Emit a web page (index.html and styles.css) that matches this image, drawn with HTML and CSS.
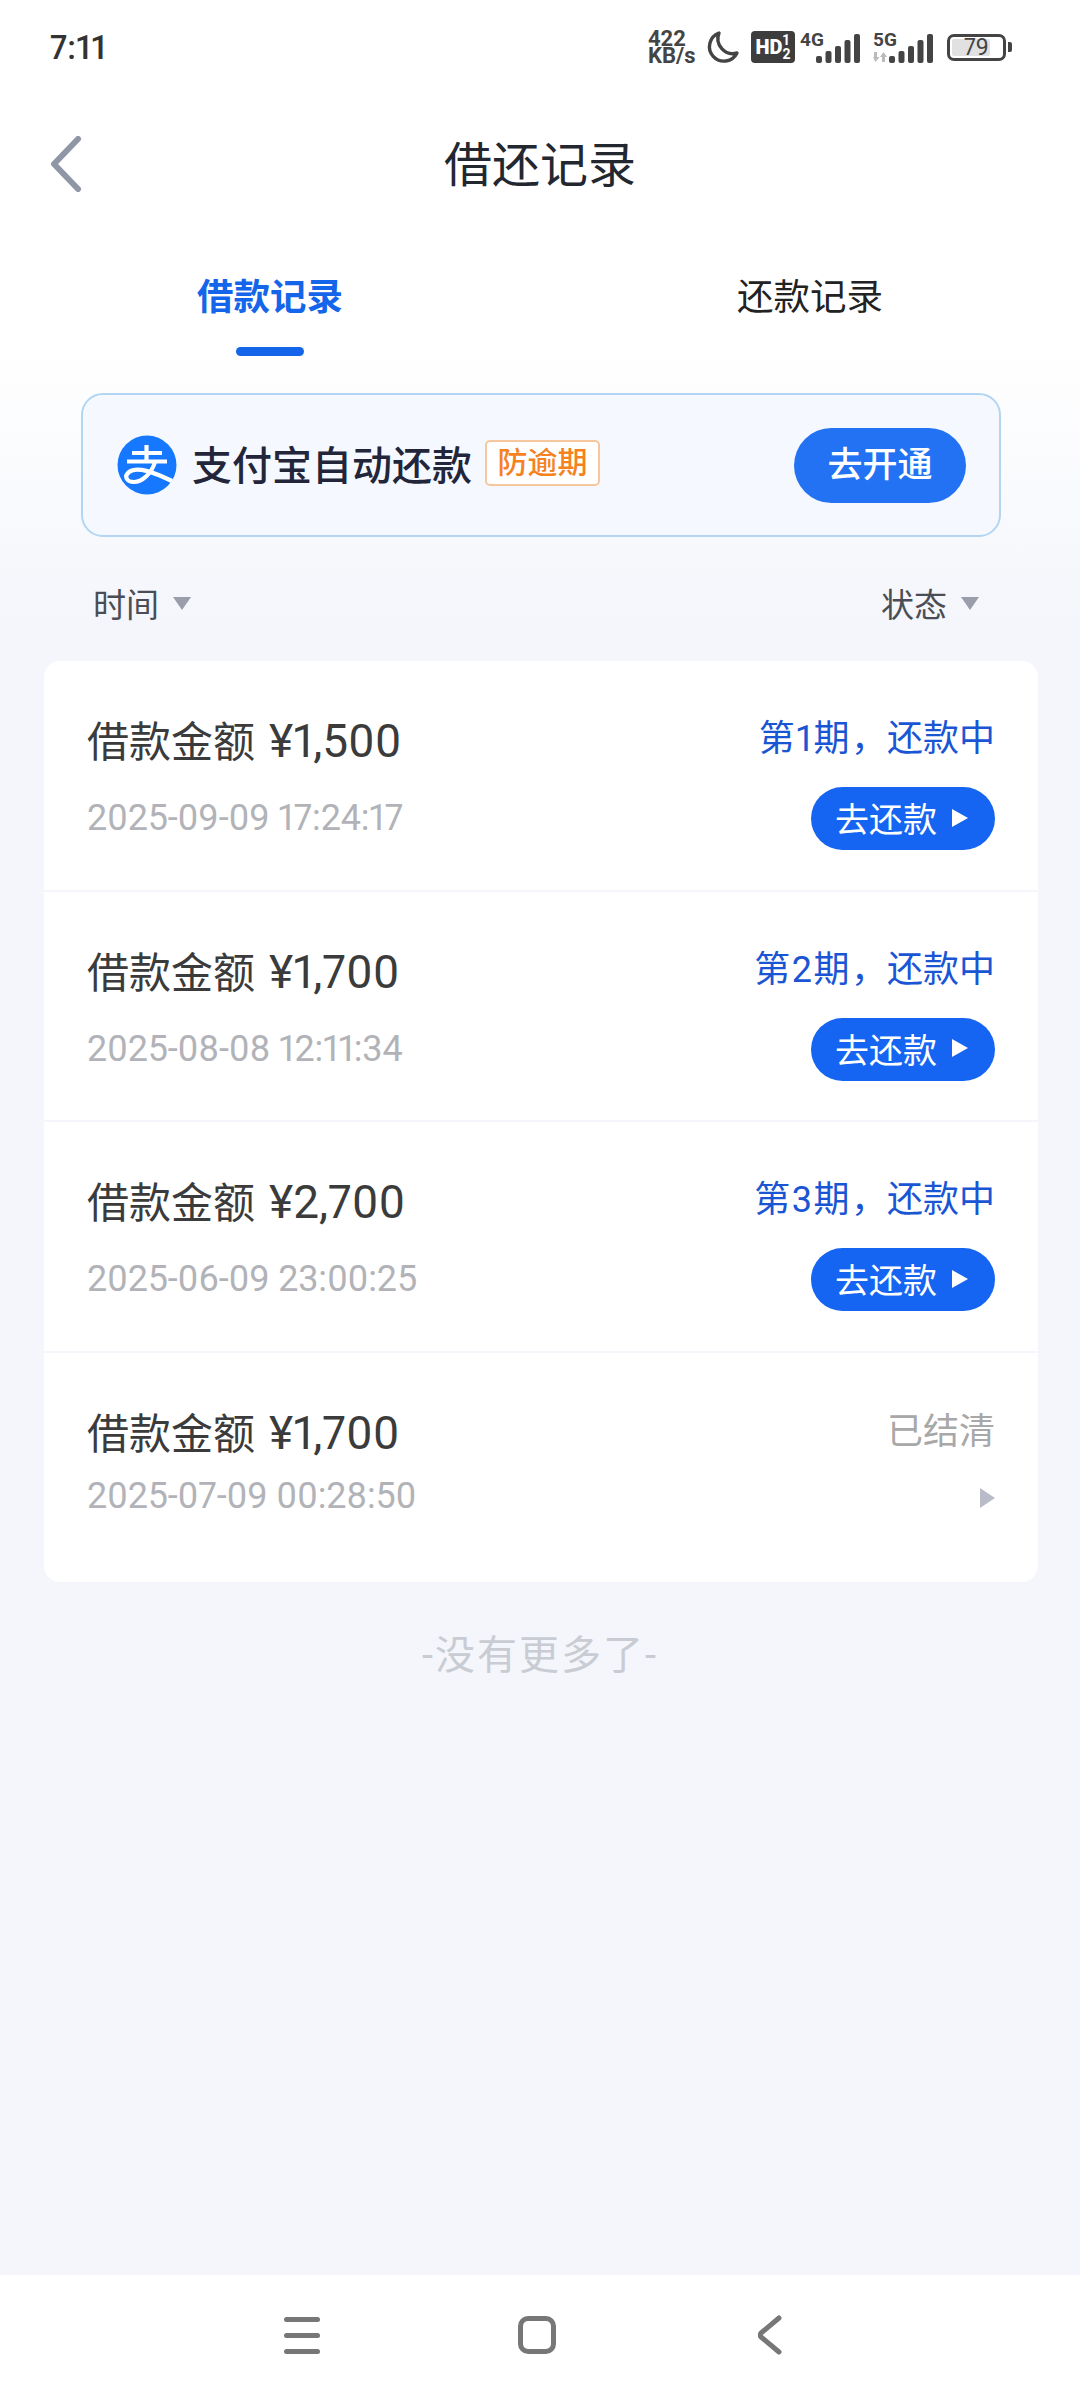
FILE: index.html
```html
<!DOCTYPE html>
<html lang="zh-CN">
<head>
	<meta charset="UTF-8">
	<meta name="viewport" content="width=device-width, initial-scale=1.0">
	<title>借还记录</title>
	<link rel="stylesheet" href="styles.css">
</head>
<body>
	<div class="page">
		<!-- status bar -->
		<div class="status-bar">
			<span class="clock">7:11</span>
			<div class="status-icons">
				<div class="speed"><span>422</span><span>KB/s</span></div>
				<svg class="moon" width="34" height="34" viewBox="0 0 34 34"><path d="M13 3 A14.5 14.5 0 1 0 31 23 A15 15 0 0 1 13 3 Z" fill="none" stroke="#444" stroke-width="3.4" stroke-linejoin="round"/></svg>
				<div class="hd"><b>HD</b><span class="hd-sub"><i>1</i><i>2</i></span></div>
				<div class="net net-first">
					<span class="net-label">4G</span>
					<svg width="44" height="29" viewBox="0 0 44 29"><g fill="#444"><rect x="0" y="22" width="6" height="7" rx="2"/><rect x="9.500" y="17" width="6" height="12" rx="2"/><rect x="19" y="12" width="6" height="17" rx="2"/><rect x="28.500" y="6" width="6" height="23" rx="2"/><rect x="38" y="0" width="6" height="29" rx="2"/></g></svg>
				</div>
				<div class="net">
					<span class="net-label">5G</span>
					<svg class="updown" width="14" height="10" viewBox="0 0 14 10"><path d="M1 0h3v5h2.500L2.500 10 0 5h1zM9 10h3V5h2L10.500 0 7 5h2z" fill="#bbb"/></svg>
					<svg width="44" height="29" viewBox="0 0 44 29"><g fill="#444"><rect x="0" y="22" width="6" height="7" rx="2"/><rect x="9.500" y="17" width="6" height="12" rx="2"/><rect x="19" y="12" width="6" height="17" rx="2"/><rect x="28.500" y="6" width="6" height="23" rx="2"/><rect x="38" y="0" width="6" height="29" rx="2"/></g></svg>
				</div>
				<div class="battery"><div class="battery-body"><div class="battery-fill"></div><span>79</span></div><div class="battery-nub"></div></div>
			</div>
		</div>

		<!-- title -->
		<div class="header">
			<svg class="back" width="32" height="56" viewBox="0 0 32 56"><path d="M28 3 L4 28 L28 53" fill="none" stroke="#8f96a6" stroke-width="6" stroke-linecap="round" stroke-linejoin="round"/></svg>
			<h1>借还记录</h1>
		</div>

		<!-- tabs -->
		<div class="tabs">
			<div class="tab active">借款记录</div>
			<div class="tab">还款记录</div>
		</div>

		<!-- alipay banner -->
		<div class="banner">
			<svg class="alipay" width="60" height="60" viewBox="0 0 60 60">
				<circle cx="30" cy="30" r="29.500" fill="#1677ff"/>
				<path d="M15 18H45M29.500 10V26M10 26.500H50M38 27C34 40 24 47 17 47C9 47 7 41 12 37C20 31 36 37 55 46" fill="none" stroke="#fff" stroke-width="4.200"/>
			</svg>
			<span class="banner-text">支付宝自动还款</span>
			<span class="banner-tag">防逾期</span>
			<span class="banner-btn">去开通</span>
		</div>

		<!-- filters -->
		<div class="filters">
			<div class="filter">时间<span class="caret"></span></div>
			<div class="filter">状态<span class="caret"></span></div>
		</div>

		<!-- records -->
		<div class="card">
			<div class="row">
				<div class="row-left">
					<div class="amount">借款金额<span class="money">¥1,500</span></div>
					<div class="date">2025-09-09 17:24:17</div>
				</div>
				<div class="row-right">
					<div class="state"><span class="term">第1期</span>，还款中</div>
					<div class="pay-btn">去还款<span class="play"></span></div>
				</div>
			</div>
			<div class="row">
				<div class="row-left">
					<div class="amount">借款金额<span class="money">¥1,700</span></div>
					<div class="date">2025-08-08 12:11:34</div>
				</div>
				<div class="row-right">
					<div class="state"><span class="term">第2期</span>，还款中</div>
					<div class="pay-btn">去还款<span class="play"></span></div>
				</div>
			</div>
			<div class="row">
				<div class="row-left">
					<div class="amount">借款金额<span class="money">¥2,700</span></div>
					<div class="date">2025-06-09 23:00:25</div>
				</div>
				<div class="row-right">
					<div class="state"><span class="term">第3期</span>，还款中</div>
					<div class="pay-btn">去还款<span class="play"></span></div>
				</div>
			</div>
			<div class="row row-done">
				<div class="row-left">
					<div class="amount">借款金额<span class="money">¥1,700</span></div>
					<div class="date">2025-07-09 00:28:50</div>
				</div>
				<div class="row-right">
					<div class="state state-done">已结清</div>
					<span class="play-grey"></span>
				</div>
			</div>
		</div>

		<div class="no-more">-没有更多了-</div>

		<!-- system nav -->
		<div class="nav">
			<div class="nav-menu"><span></span><span></span><span></span></div>
			<div class="nav-home"></div>
			<svg width="24" height="40" viewBox="0 0 24 40"><path d="M21 3 L3 18 Q1.500 20 3 22 L21 37" fill="none" stroke="#777" stroke-width="5" stroke-linecap="round"/></svg>
		</div>
	</div>
</body>
</html>
```
FILE: styles.css
```css
* {
	box-sizing: border-box;
}

body {
	margin: 0;
	font-family: Roboto, "Noto Sans CJK SC", sans-serif;
	font-variant-numeric: proportional-nums;
	color: #333;
}

.page {
	width: 1080px;
	height: 2400px;
	display: flex;
	flex-direction: column;
	background: linear-gradient(#fff 340px, #f4f6fb 620px);
}

/* status bar */
.status-bar {
	height: 94px;
	padding: 0 68px 0 50px;
	display: flex;
	align-items: center;
	justify-content: space-between;
}

.clock {
	font-size: 33px;
	font-weight: 500;
	color: #333;
}

.status-icons {
	display: flex;
	align-items: center;
}

.speed {
	width: 58px;
	display: flex;
	flex-direction: column;
	font-size: 22px;
	line-height: 17px;
	font-weight: 700;
	color: #444;
}

.hd {
	width: 44px;
	height: 32px;
	margin-left: 11px;
	background: #3d3d3d;
	border-radius: 4px;
	color: #fff;
	display: flex;
	align-items: center;
	justify-content: center;
	font-size: 20px;
	font-weight: 700;
}

.hd-sub {
	display: flex;
	flex-direction: column;
	font-size: 14px;
	line-height: 14px;
}

.hd-sub i {
	font-style: normal;
}

.net {
	position: relative;
	width: 60px;
	height: 32px;
	display: flex;
	justify-content: flex-end;
	align-items: flex-end;
}

.net-first {
	margin-left: 5px;
}

.net + .net {
	margin-left: 13px;
}

.net-label {
	position: absolute;
	left: 0;
	top: -3px;
	font-size: 19px;
	font-weight: 700;
	color: #444;
}

.updown {
	position: absolute;
	left: 0;
	bottom: 1px;
}

.battery {
	margin-left: 14px;
	display: flex;
	align-items: center;
	gap: 2px;
}

.battery-body {
	position: relative;
	width: 59px;
	height: 27px;
	border: 3px solid #444;
	border-radius: 7px;
	font-size: 23px;
	color: #444;
	text-align: center;
	line-height: 21px;
}

.battery-fill {
	position: absolute;
	left: 2px;
	top: 2px;
	bottom: 2px;
	width: 38px;
	background: #e1e1e1;
	border-radius: 2px;
}

.battery-body span {
	position: relative;
}

.battery-nub {
	width: 4px;
	height: 10px;
	background: #444;
	border-radius: 0 2px 2px 0;
}

/* header */
.header {
	height: 140px;
	position: relative;
	display: flex;
	align-items: center;
	justify-content: center;
	padding-bottom: 6px;
}

.back {
	position: absolute;
	left: 50px;
	top: 42px;
}

h1 {
	margin: 0;
	font-size: 48px;
	font-weight: 400;
	color: #23272f;
}

/* tabs */
.tabs {
	height: 130px;
	display: flex;
}

.tab {
	flex: 1;
	padding-top: 39px;
	position: relative;
	text-align: center;
	font-size: 36.500px;
	line-height: 50px;
	color: #222;
}

.tab.active {
	color: #1565ea;
	font-weight: 700;
}

.tab.active::after {
	content: "";
	position: absolute;
	left: 50%;
	top: 113px;
	width: 68px;
	height: 9px;
	margin-left: -34px;
	border-radius: 5px;
	background: #1565ea;
}

/* banner */
.banner {
	height: 144px;
	margin: 29px 79px 0 81px;
	padding: 0 33px 0 34px;
	display: flex;
	align-items: center;
	background: #f5f9ff;
	border: 2px solid #b4d5f2;
	border-radius: 22px;
}

.alipay {
	flex: none;
}

.banner-text {
	margin: -4px 0 0 15px;
	font-size: 40px;
	font-weight: 500;
	color: #23263a;
}

.banner-tag {
	margin-left: 13px;
	margin-top: -4px;
	width: 115px;
	height: 46px;
	border: 2px solid #f6c79c;
	border-radius: 5px;
	background: #fff;
	color: #f5811f;
	font-size: 30px;
	font-weight: 500;
	line-height: 41px;
	text-align: center;
}

.banner-btn {
	margin-left: auto;
	width: 172px;
	height: 75px;
	border-radius: 38px;
	background: #2272f3;
	color: #fff;
	font-size: 35px;
	font-weight: 500;
	line-height: 75px;
	text-align: center;
}

/* filter row */
.filters {
	height: 124px;
	padding: 8px 101px 0 93px;
	display: flex;
	align-items: center;
	justify-content: space-between;
}

.filter {
	display: flex;
	align-items: center;
	font-size: 33px;
	color: #4a4d55;
}

.caret {
	margin-left: 14px;
	border-top: 13px solid #9a9daa;
	border-left: 9px solid transparent;
	border-right: 9px solid transparent;
}

/* list */
.card {
	margin: 0 42px 0 44px;
	background: #fff;
	border-radius: 16px;
}

.row {
	height: 230.500px;
	padding: 50px 43px 0 43px;
	display: flex;
	justify-content: space-between;
	border-bottom: 2px solid #f4f6fb;
}

.row:last-child {
	border-bottom: 0;
	height: 229.500px;
}

.amount {
	font-size: 42px;
	line-height: 60px;
	color: #3b3b3b;
}

.money {
	margin-left: 14px;
	font-size: 46px;
}

.date {
	margin-top: 20px;
	font-size: 36px;
	letter-spacing: -0.200px;
	line-height: 50px;
	color: #b2b3b8;
}

.row-done .date {
	margin-top: 6px;
}

.row-right {
	display: flex;
	flex-direction: column;
	align-items: flex-end;
}

.state {
	font-size: 36px;
	line-height: 56px;
	color: #1a55d4;
}

.term {
	letter-spacing: 1.500px;
}

.state-done {
	margin-top: 1px;
	color: #a8a8a8;
}

.pay-btn {
	margin-top: 20px;
	width: 184px;
	height: 63px;
	padding: 0 0 2px 24px;
	border-radius: 32px;
	background: #1565f2;
	color: #fff;
	font-size: 34px;
	display: flex;
	align-items: center;
}

.play {
	margin-left: 15px;
	border-left: 16px solid #fff;
	border-top: 9px solid transparent;
	border-bottom: 9px solid transparent;
}

.play-grey {
	margin-top: 28px;
	border-left: 15px solid #b9bbc8;
	border-top: 10px solid transparent;
	border-bottom: 10px solid transparent;
}

.no-more {
	margin-top: 44px;
	text-align: center;
	font-size: 40px;
	letter-spacing: 2px;
	line-height: 60px;
	color: #c9ccd3;
}

/* system nav */
.nav {
	margin-top: auto;
	height: 125px;
	background: #fff;
	padding: 0 298px 5px 284px;
	display: flex;
	align-items: center;
	justify-content: space-between;
}

.nav-menu {
	width: 36px;
	display: flex;
	flex-direction: column;
	gap: 11px;
}

.nav-menu span {
	height: 5px;
	border-radius: 3px;
	background: #777;
}

.nav-home {
	width: 38px;
	height: 38px;
	margin-right: 4px;
	border: 5px solid #777;
	border-radius: 10px;
}
```
